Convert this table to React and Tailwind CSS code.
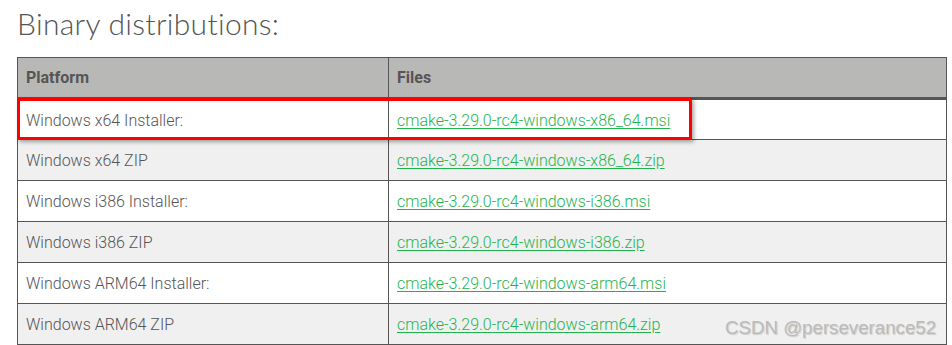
const rows = [
  ['Windows x64 Installer:', 'cmake-3.29.0-rc4-windows-x86_64.msi'],
  ['Windows x64 ZIP', 'cmake-3.29.0-rc4-windows-x86_64.zip'],
  ['Windows i386 Installer:', 'cmake-3.29.0-rc4-windows-i386.msi'],
  ['Windows i386 ZIP', 'cmake-3.29.0-rc4-windows-i386.zip'],
  ['Windows ARM64 Installer:', 'cmake-3.29.0-rc4-windows-arm64.msi'],
  ['Windows ARM64 ZIP', 'cmake-3.29.0-rc4-windows-arm64.zip'],
];

export default function App() {
  return (
    <div className="relative h-[345px] w-[952px] overflow-hidden bg-white font-['Roboto',sans-serif] text-[#555]">
      <h2 className="ml-[17px] pt-[3px] font-['Lato',sans-serif] text-[30px] font-light leading-[40px] tracking-[0.3px] text-[#555]">
        Binary distributions:
      </h2>

      <table className="ml-[17px] mt-[14px] w-[930px] border-collapse text-[16px]">
        <thead>
          <tr className="h-[41px] bg-[#b8b8b7]">
            <th className="w-[371px] border border-b-[3px] border-[#555] px-[8px] text-left text-[16px] font-bold">Platform</th>
            <th className="border border-b-[3px] border-[#555] px-[8px] text-left text-[16px] font-bold">Files</th>
          </tr>
        </thead>
        <tbody>
          {rows.map(([platform, file], i) => (
            <tr key={file} className={`h-[41px] ${i % 2 ? 'bg-[#f0f0f0]' : 'bg-white'}`}>
              <td className="border border-[#555] px-[8px] pt-[2px] font-light">{platform}</td>
              <td className="border border-[#555] px-[8px] pt-[2px]">
                <a href="#" className="font-light text-[#1fb44e] underline underline-offset-2">{file}</a>
              </td>
            </tr>
          ))}
        </tbody>
      </table>

      {/* red highlight box */}
      <div className="absolute left-[17px] top-[98px] h-[42px] w-[675px] border-[3px] border-[#f00] shadow-[2px_2px_4px_rgba(0,0,0,0.35)]" />

      <div className="absolute left-[725px] top-[314px] font-['Liberation_Sans',sans-serif] text-[18.7px] text-[#bbb] [text-shadow:1px_1px_1px_rgba(0,0,0,0.15)]">
        CSDN @perseverance52
      </div>
    </div>
  );
}
